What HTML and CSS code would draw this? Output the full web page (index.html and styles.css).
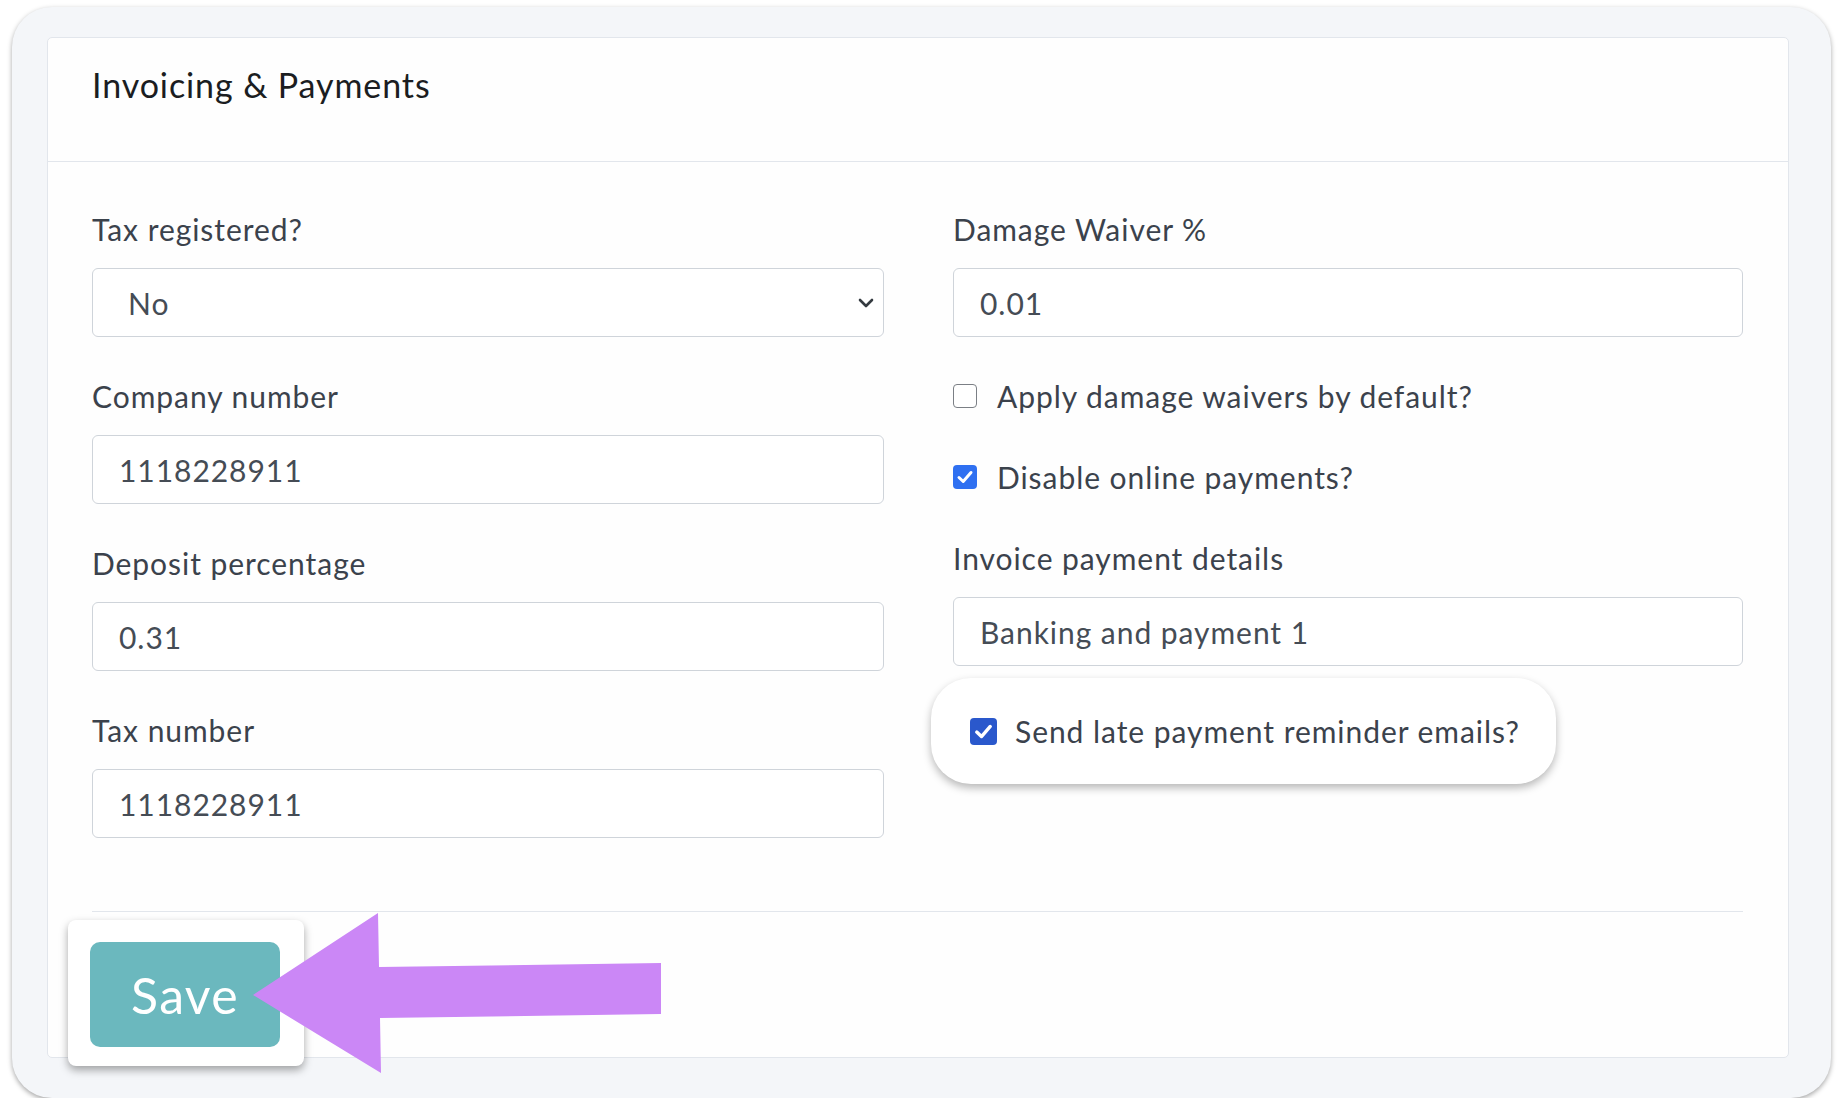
FILE: index.html
```html
<!DOCTYPE html>
<html lang="en">
<head>
<meta charset="utf-8">
<title>Invoicing &amp; Payments</title>
<link rel="stylesheet" href="styles.css">
</head>
<body>
<div class="frame">
  <section class="card">
    <header class="card-header">
      <h2 class="card-title">Invoicing &amp; Payments</h2>
    </header>
    <div class="card-body">
      <div class="col">
        <div class="group">
          <div class="label">Tax registered?</div>
          <div class="control select">
            <span class="value sel-value">No</span>
            <svg class="chev" width="16" height="10" viewBox="0 0 16 10"><polyline points="2,2 8,8 14,2" fill="none" stroke="#343a40" stroke-width="2.6" stroke-linecap="round" stroke-linejoin="round"/></svg>
          </div>
        </div>
        <div class="group">
          <div class="label">Company number</div>
          <div class="control"><span class="value">1118228911</span></div>
        </div>
        <div class="group">
          <div class="label">Deposit percentage</div>
          <div class="control"><span class="value">0.31</span></div>
        </div>
        <div class="group">
          <div class="label">Tax number</div>
          <div class="control"><span class="value">1118228911</span></div>
        </div>
      </div>
      <div class="col">
        <div class="group">
          <div class="label">Damage Waiver %</div>
          <div class="control"><span class="value">0.01</span></div>
        </div>
        <div class="check-row">
          <span class="cb"></span>
          <span class="check-text">Apply damage waivers by default?</span>
        </div>
        <div class="check-row">
          <span class="cb checked"><svg width="24" height="24" viewBox="0 0 24 24"><polyline points="6,12.5 10.2,16.5 18,7.5" fill="none" stroke="#fff" stroke-width="3" stroke-linecap="round" stroke-linejoin="round"/></svg></span>
          <span class="check-text">Disable online payments?</span>
        </div>
        <div class="group tight">
          <div class="label">Invoice payment details</div>
          <div class="control"><span class="value">Banking and payment 1</span></div>
        </div>
        <div class="highlight">
          <span class="cb checked big"><svg width="27" height="27" viewBox="0 0 24 24"><polyline points="6,12.5 10.2,16.5 18,7.5" fill="none" stroke="#fff" stroke-width="3" stroke-linecap="round" stroke-linejoin="round"/></svg></span>
          <span class="check-text">Send late payment reminder emails?</span>
        </div>
      </div>
    </div>
    <footer class="card-footer">
      <div class="save-callout">
        <button class="btn-save" type="button">Save</button>
      </div>
      <svg class="arrow" width="420" height="170" viewBox="0 0 420 170">
        <polygon points="0,82 125,0 126,54 408,50 408,101 127,105 128,160" fill="#cb87f6"/>
      </svg>
    </footer>
  </section>
</div>
</body>
</html>
```
FILE: styles.css
```css
* { box-sizing: border-box; }

html, body {
  margin: 0;
  padding: 0;
  background: #ffffff;
}

body {
  font-family: "Lato", "Noto Sans", sans-serif;
  color: #3b424c;
}

.frame {
  margin: 7px 13px 0 12px;
  width: 1819px;
  height: 1091px;
  padding: 30px 42px 40px 35px;
  background: #f4f6f9;
  border-radius: 40px;
  box-shadow: 0 2px 5px rgba(0, 0, 0, 0.35);
}

.card {
  background: #fefefe;
  border: 1px solid #e2e6ec;
  border-radius: 5px;
  height: 1021px;
  display: flex;
  flex-direction: column;
}

.card-header {
  padding: 27px 44px 56px 44px;
  border-bottom: 1px solid #e2e6ec;
}

.card-title {
  margin: 0;
  font-size: 34px;
  line-height: 40px;
  letter-spacing: 0.9px;
  font-weight: 400;
  color: #1b1d21;
}

.card-body {
  display: grid;
  grid-template-columns: 792px 790px;
  column-gap: 69px;
  padding: 46px 45px 73px 44px;
}

.col {
  display: flex;
  flex-direction: column;
}

.group {
  display: flex;
  flex-direction: column;
  margin-bottom: 38px;
}

.group:last-child { margin-bottom: 0; }

.label {
  font-size: 30px;
  line-height: 42px;
  letter-spacing: 0.95px;
  margin-bottom: 18px;
  color: #3b424c;
  white-space: nowrap;
}

.control {
  height: 69px;
  border: 1.5px solid #cfd4da;
  border-radius: 6px;
  background: #ffffff;
  display: flex;
  align-items: center;
  padding: 0 26px;
}

.value {
  font-size: 30px;
  letter-spacing: 0.95px;
  color: #454c55;
  white-space: nowrap;
}

.select {
  justify-content: space-between;
  padding: 0 9px 0 35px;
}

.check-row {
  display: flex;
  align-items: center;
  height: 42px;
  gap: 20px;
  margin-bottom: 39px;
}

.check-text {
  font-size: 30px;
  letter-spacing: 0.95px;
  color: #3b424c;
  white-space: nowrap;
}

.cb {
  width: 24px;
  height: 24px;
  border: 1.5px solid #7b7f85;
  border-radius: 4px;
  background: #ffffff;
  flex: none;
  display: flex;
  align-items: center;
  justify-content: center;
}

.cb.checked {
  border: none;
  background: #2f70f1;
}

.cb.big {
  width: 27px;
  height: 27px;
  background: #2a58cc;
}

.group.tight { margin-bottom: 12px; }

.highlight {
  align-self: flex-start;
  margin-left: -22px;
  height: 106px;
  padding: 0 36px 0 39px;
  display: flex;
  align-items: center;
  gap: 18px;
  background: #ffffff;
  border-radius: 40px;
  box-shadow: 0 4px 8px rgba(0, 0, 0, 0.28);
}

.card-footer {
  position: relative;
  margin: 0 45px 0 44px;
  border-top: 1.5px solid #e2e6ec;
  flex: 1;
}

.save-callout {
  position: absolute;
  left: -24px;
  top: 8px;
  width: 236px;
  height: 146px;
  padding: 22px;
  background: #ffffff;
  border-radius: 8px;
  box-shadow: 0 4px 8px rgba(0, 0, 0, 0.35);
}

.btn-save {
  display: block;
  width: 190px;
  height: 105px;
  border: none;
  border-radius: 10px;
  background: #6bb8be;
  color: #ffffff;
  font-family: "Lato", "Noto Sans", sans-serif;
  font-size: 50px;
  letter-spacing: 1.3px;
  font-weight: 400;
  padding: 0;
}

.arrow {
  position: absolute;
  left: 161px;
  top: 1px;
}
```
